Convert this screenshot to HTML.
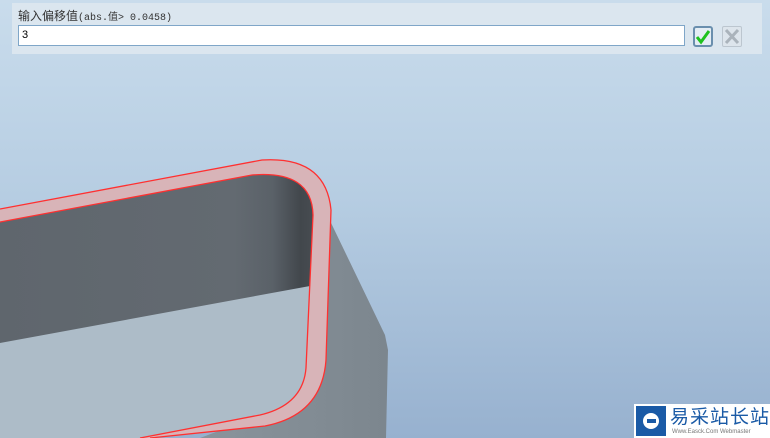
<!DOCTYPE html>
<html><head><meta charset="utf-8"><style>
html,body{margin:0;padding:0;width:770px;height:438px;overflow:hidden;}
body{background:linear-gradient(180deg,#c9dcec 0%,#b6cde2 45%,#97b1cf 100%);position:relative;font-family:"Liberation Sans","Noto Sans CJK SC",sans-serif;}
#panel{position:absolute;left:12px;top:3px;width:750px;height:51px;background:#dbe6ef;}
#lbl{position:absolute;left:6px;top:4px;font-size:12px;color:#333;}
#lbl span{font-family:"Liberation Mono","Noto Sans CJK SC",monospace;font-size:10px;}
#inp{position:absolute;left:6px;top:22px;width:667px;height:21px;background:#fff;border:1px solid #7fa6c8;box-sizing:border-box;font-size:11px;padding:3px 0 0 3px;color:#000;}
.btn{position:absolute;top:23px;width:20px;height:21px;box-sizing:border-box;}
#ok{left:681px;border:2px solid #6a8fae;border-radius:3px;background:#e4edf4;}
#no{left:710px;border:1px solid #bcc6cf;border-radius:2px;background:#dde5ec;}
#logo{position:absolute;left:634px;top:404px;width:136px;height:34px;background:#fff;}
</style></head><body>
<svg width="770" height="438" style="position:absolute;left:0;top:0">
<defs>
<linearGradient id="wall" x1="0" x2="1" y1="0" y2="0">
<stop offset="0" stop-color="#5f666d"/><stop offset="0.75" stop-color="#636a71"/><stop offset="0.87" stop-color="#5a6168"/><stop offset="0.96" stop-color="#42474c"/><stop offset="1" stop-color="#474c51"/></linearGradient>
<linearGradient id="side" x1="0" x2="1" y1="0" y2="0">
<stop offset="0" stop-color="#8a949c"/><stop offset="1" stop-color="#7c868e"/></linearGradient>
</defs>
<polygon points="320,200 385,335 388,350 386,438 200,438 300,400" fill="url(#side)"/>
<path d="M0,209 L262,160 Q326,156 331,210 L326,360 Q322,415 265,426 L150,438 L0,438 Z" fill="#d8b4b8"/>
<path d="M0,222 L252,175 Q312,170 313,215 L306,368 Q303,405 260,415 L140,438 L0,438 Z" fill="#adbcc8"/>
<path d="M0,222 L252,175 Q312,170 313,215 L310,286 L0,343 Z" fill="url(#wall)"/>
<path d="M0,209 L262,160 Q326,156 331,210 L326,360 Q322,415 265,426 L150,438" fill="none" stroke="#ff3030" stroke-width="1.3"/>
<path d="M0,222 L252,175 Q312,170 313,215 L306,368 Q303,405 260,415 L140,438" fill="none" stroke="#ff3030" stroke-width="1.3"/>
</svg>
<div id="panel">
<div id="lbl">输入偏移值<span>(abs.值&gt; 0.0458)</span></div>
<div id="inp">3</div>
<div class="btn" id="ok"><svg width="16" height="17" viewBox="0 0 16 17"><path d="M2,9 L6,14 L14,3" fill="none" stroke="#1fc21f" stroke-width="3"/></svg></div>
<div class="btn" id="no"><svg width="18" height="19" viewBox="0 0 18 19"><path d="M3,3 L15,16 M15,3 L3,16" stroke="#aab3bb" stroke-width="3"/></svg></div>
</div>
<div id="logo">
<div style="position:absolute;left:2px;top:2px;width:30px;height:30px;background:#1a5aa6;"><div style="position:absolute;left:7px;top:7px;width:16px;height:16px;border-radius:50%;background:#fff;"></div><div style="position:absolute;left:11px;top:13px;width:9px;height:4px;background:#1a5aa6;"></div></div>
<div style="position:absolute;left:36px;top:1px;font-size:19px;color:#1a5aa6;font-family:'Noto Sans CJK SC',sans-serif;line-height:22px;letter-spacing:1px;">易采站长站</div>
<div style="position:absolute;left:38px;top:25px;font-size:6px;color:#777;white-space:nowrap;">Www.Easck.Com Webmaster</div>
</div>
</body></html>
